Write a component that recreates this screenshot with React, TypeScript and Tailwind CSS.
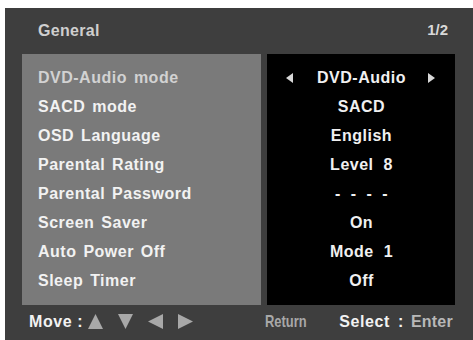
const ROWS = [
  { label: 'DVD-Audio mode', value: 'DVD-Audio', active: true },
  { label: 'SACD mode', value: 'SACD' },
  { label: 'OSD Language', value: 'English' },
  { label: 'Parental Rating', value: 'Level 8' },
  { label: 'Parental Password', value: '- - - -' },
  { label: 'Screen Saver', value: 'On' },
  { label: 'Auto Power Off', value: 'Mode 1' },
  { label: 'Sleep Timer', value: 'Off' },
]

function Tri({ dir }: { dir: 'up' | 'down' | 'left' | 'right' }) {
  const pts = {
    up: '7.5,0 15,15 0,15',
    down: '0,0 15,0 7.5,15',
    left: '15,0 15,15 0,7.5',
    right: '0,0 15,7.5 0,15',
  }[dir]
  return (
    <svg width="15" height="15" viewBox="0 0 15 15" className="shrink-0">
      <polygon points={pts} fill="#a8a8a8" />
    </svg>
  )
}

export default function App() {
  return (
    <div
      className="w-[473px] h-[340px] bg-white pt-[8px] pl-[5px] overflow-hidden"
      style={{ fontFamily: '"Liberation Sans", Arial, sans-serif' }}
    >
      <div className="flex h-[332px] w-[468px] flex-col bg-[#3e3e3e]">
        <div className="flex h-[46px] items-center justify-between pl-[33px] pr-[25px] pb-[1px]">
          <span className="text-[16px] font-bold tracking-[0.3px] text-[#cfcfcf]">General</span>
          <span className="text-[15px] font-bold text-[#d8d8d8]">1/2</span>
        </div>

        <div className="flex h-[251px] gap-[6px] pl-[17px]">
          <div className="w-[239px] bg-[#7a7a7a] pt-[9px] pl-[16px]">
            {ROWS.map(r => (
              <div
                key={r.label}
                className={`flex h-[29px] items-center text-[16px] font-bold tracking-[0.5px] [word-spacing:2px] ${
                  r.active ? 'text-[#d2d2d2]' : 'text-[#f2f2f2]'
                }`}
              >
                {r.label}
              </div>
            ))}
          </div>
          <div className="w-[188px] bg-black pt-[9px]">
            {ROWS.map(r => (
              <div
                key={r.label}
                className="relative flex h-[29px] items-center justify-center text-[16px] font-bold tracking-[0.5px] text-[#f0f0f0] [word-spacing:5px]"
              >
                {r.active && (
                  <span className="absolute left-[19px] top-[10px] h-0 w-0 border-y-[5px] border-r-[7px] border-y-transparent border-r-[#d8d8d8]" />
                )}
                <span className="pl-[1px]">{r.value}</span>
                {r.active && (
                  <span className="absolute right-[20px] top-[10px] h-0 w-0 border-y-[5px] border-l-[7px] border-y-transparent border-l-[#d8d8d8]" />
                )}
              </div>
            ))}
          </div>
        </div>

        <div className="flex flex-1 items-center pl-[24px] pb-[2px]">
          <span className="text-[16px] font-bold tracking-[0.6px] text-[#f2f2f2]">Move :</span>
          <div className="ml-[5px] flex items-center gap-[15px]">
            <Tri dir="up" />
            <Tri dir="down" />
            <Tri dir="left" />
            <Tri dir="right" />
          </div>
          <span className="ml-[72px] inline-block w-[40px] origin-left scale-x-[0.76] whitespace-nowrap text-[17px] font-bold text-[#a8a8a8]">
            Return
          </span>
          <span className="ml-[34px] text-[16px] font-bold tracking-[0.6px] text-[#f2f2f2] [word-spacing:3px]">
            Select :
          </span>
          <span className="ml-[7px] text-[16px] font-bold tracking-[0.2px] text-[#b8b8b8]">Enter</span>
        </div>
      </div>
    </div>
  )
}
